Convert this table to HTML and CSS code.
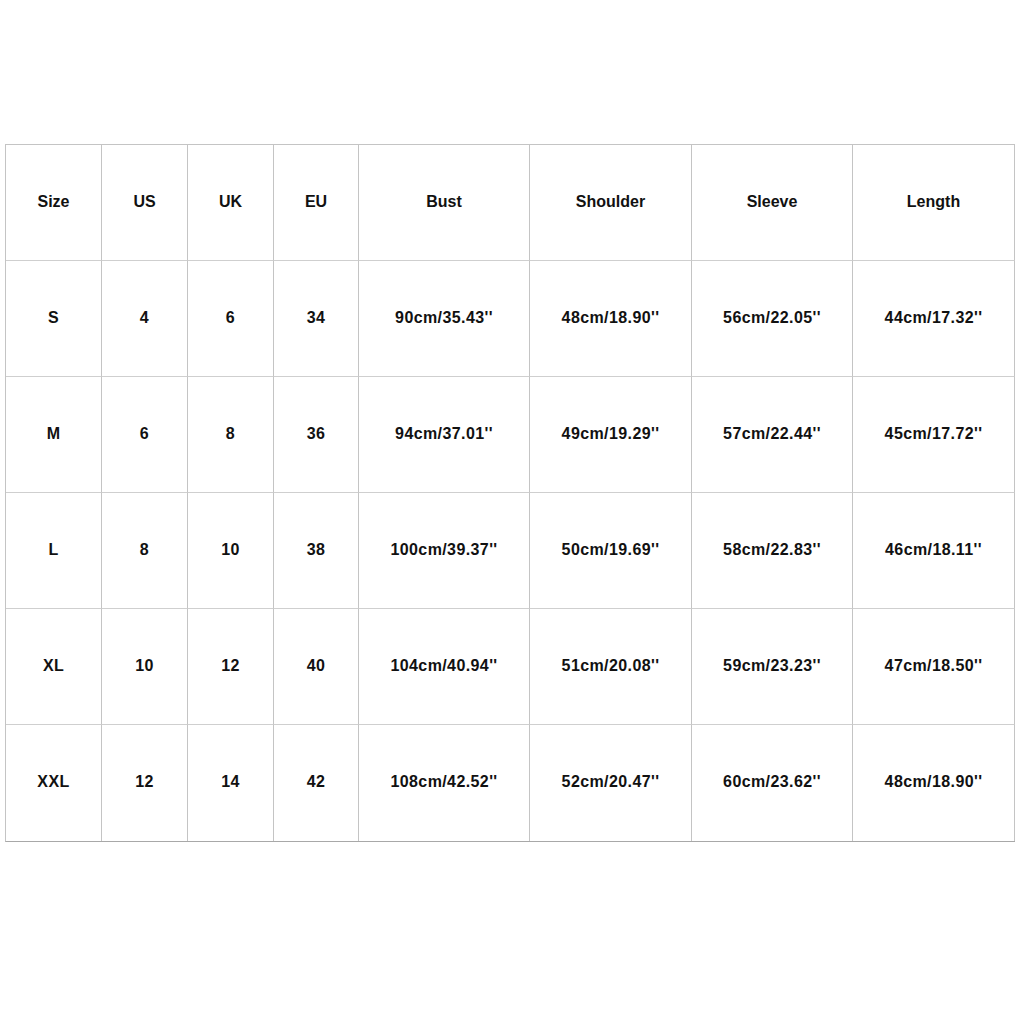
FILE: index.html
```html
<!DOCTYPE html>
<html>
<head>
<meta charset="utf-8">
<link rel="stylesheet" href="styles.css">
</head>
<body>
<div class="page">
  <div class="chart">
    <div class="cell head">Size</div><div class="cell head">US</div><div class="cell head">UK</div><div class="cell head">EU</div><div class="cell head">Bust</div><div class="cell head">Shoulder</div><div class="cell head">Sleeve</div><div class="cell head">Length</div>
    <div class="cell">S</div><div class="cell">4</div><div class="cell">6</div><div class="cell">34</div><div class="cell">90cm/35.43''</div><div class="cell">48cm/18.90''</div><div class="cell">56cm/22.05''</div><div class="cell">44cm/17.32''</div>
    <div class="cell">M</div><div class="cell">6</div><div class="cell">8</div><div class="cell">36</div><div class="cell">94cm/37.01''</div><div class="cell">49cm/19.29''</div><div class="cell">57cm/22.44''</div><div class="cell">45cm/17.72''</div>
    <div class="cell">L</div><div class="cell">8</div><div class="cell">10</div><div class="cell">38</div><div class="cell">100cm/39.37''</div><div class="cell">50cm/19.69''</div><div class="cell">58cm/22.83''</div><div class="cell">46cm/18.11''</div>
    <div class="cell">XL</div><div class="cell">10</div><div class="cell">12</div><div class="cell">40</div><div class="cell">104cm/40.94''</div><div class="cell">51cm/20.08''</div><div class="cell">59cm/23.23''</div><div class="cell">47cm/18.50''</div>
    <div class="cell">XXL</div><div class="cell">12</div><div class="cell">14</div><div class="cell">42</div><div class="cell">108cm/42.52''</div><div class="cell">52cm/20.47''</div><div class="cell">60cm/23.62''</div><div class="cell">48cm/18.90''</div>
  </div>
</div>
</body>
</html>
```
FILE: styles.css
```css
html, body {
  margin: 0;
  padding: 0;
  background: #ffffff;
}
.page {
  width: 1024px;
  height: 1024px;
  padding: 144px 0 0 5px;
  box-sizing: border-box;
}
.chart {
  display: grid;
  grid-template-columns: 96px 86px 86px 85px 171px 162px 161px 162px;
  grid-template-rows: repeat(6, 116px);
  width: 1010px;
  border-top: 1px solid #c4c4c4;
  border-left: 1px solid #c4c4c4;
  border-bottom: 1px solid #a8a8a8;
  box-sizing: border-box;
}
.cell {
  display: flex;
  align-items: center;
  justify-content: center;
  border-right: 1px solid #c4c4c4;
  border-bottom: 1px solid #cfcfcf;
  font-family: "Liberation Sans", Arial, sans-serif;
  font-weight: bold;
  font-size: 16px;
  letter-spacing: 0.4px;
  color: #111111;
  padding-bottom: 2px;
  box-sizing: border-box;
}
.head {
  letter-spacing: 0;
}
.chart > .cell:nth-last-child(-n+8) {
  border-bottom: none;
}
```
